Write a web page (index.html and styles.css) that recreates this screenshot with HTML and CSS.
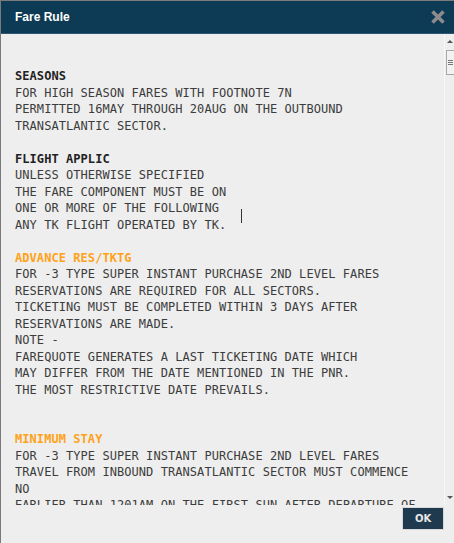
FILE: index.html
```html
<!DOCTYPE html>
<html lang="en">
<head>
    <meta charset="UTF-8">
    <title>Fare Rule</title>
    <link rel="stylesheet" href="styles.css">
</head>
<body>
    <div class="dialog">
        <div class="titlebar">
            <span class="title">Fare Rule</span>
            <span class="close">
                <svg width="16" height="16" viewBox="0 0 16 16">
                    <path d="M2.5 2.5 L13.5 13.5 M13.5 2.5 L2.5 13.5" stroke="#8c8c8c" stroke-width="3.6" stroke-linecap="butt"/>
                </svg>
            </span>
        </div>

        <div class="content">
<pre class="rules"><b class="head">SEASONS</b>
FOR HIGH SEASON FARES WITH FOOTNOTE 7N
PERMITTED 16MAY THROUGH 20AUG ON THE OUTBOUND
TRANSATLANTIC SECTOR.

<b class="head">FLIGHT APPLIC</b>
UNLESS OTHERWISE SPECIFIED
THE FARE COMPONENT MUST BE ON
ONE OR MORE OF THE FOLLOWING
ANY TK FLIGHT OPERATED BY TK.

<b class="head orange">ADVANCE RES/TKTG</b>
FOR -3 TYPE SUPER INSTANT PURCHASE 2ND LEVEL FARES
RESERVATIONS ARE REQUIRED FOR ALL SECTORS.
TICKETING MUST BE COMPLETED WITHIN 3 DAYS AFTER
RESERVATIONS ARE MADE.
NOTE -
FAREQUOTE GENERATES A LAST TICKETING DATE WHICH
MAY DIFFER FROM THE DATE MENTIONED IN THE PNR.
THE MOST RESTRICTIVE DATE PREVAILS.


<b class="head orange">MINIMUM STAY</b>
FOR -3 TYPE SUPER INSTANT PURCHASE 2ND LEVEL FARES
TRAVEL FROM INBOUND TRANSATLANTIC SECTOR MUST COMMENCE
NO
EARLIER THAN 1201AM ON THE FIRST SUN AFTER DEPARTURE OF
THE OUTBOUND TRANSATLANTIC SECTOR.</pre>
            <div class="scrollbar">
                <span class="arrow up"></span>
                <span class="thumb"><i></i><i></i><i></i></span>
                <span class="track"></span>
                <span class="arrow down"></span>
            </div>
            <span class="cursor"></span>
        </div>

        <div class="footer">
            <button class="ok">OK</button>
        </div>
    </div>
</body>
</html>
```

FILE: styles.css
```css
body {
    margin: 0;
    background-color: #eeeeee;
    font-family: "Liberation Sans", Arial, sans-serif;
}
.dialog {
    height: 543px;
    box-sizing: border-box;
    border-top: 1px solid #7a7a7a;
    border-left: 1px solid #7a7a7a;
    display: flex;
    flex-direction: column;
    background-color: #eeeeee;
}
.titlebar {
    height: 33px;
    flex: none;
    background-color: #0d3a54;
    border-bottom: 1px solid #2d5670;
    box-sizing: border-box;
    display: flex;
    align-items: center;
    justify-content: space-between;
    padding: 0 8px 0 14px;
}
.title {
    color: #fff;
    font-weight: bold;
    font-size: 12px;
}
.close {
    display: flex;
    width: 16px;
    height: 16px;
    margin-top: -1px;
}
.content {
    position: relative;
    height: 471px;
    flex: none;
    display: flex;
    overflow: hidden;
}
.rules {
    flex: 1;
    margin: 0;
    padding: 34px 0 0 14px;
    font-family: "DejaVu Sans Mono", monospace;
    font-size: 12px;
    letter-spacing: 0.06px;
    line-height: 16.5px;
    color: #3c3c3c;
    overflow: hidden;
}
.head {
    color: #222;
}
.orange {
    color: #ffa217;
}
.scrollbar {
    width: 9px;
    flex: none;
    border-left: 1px solid #f8f8f8;
    display: flex;
    flex-direction: column;
    align-items: center;
    padding-top: 6px;
    padding-bottom: 6px;
}
.arrow {
    width: 0;
    height: 0;
    border-left: 3px solid transparent;
    border-right: 3px solid transparent;
}
.arrow.up {
    border-bottom: 3px solid #555;
}
.arrow.down {
    border-top: 3px solid #555;
}
.thumb {
    width: 8px;
    height: 25px;
    margin-top: 7px;
    box-sizing: border-box;
    border: 1px solid #a8a8a8;
    border-right: none;
    background-color: #f2f2f2;
    display: flex;
    flex-direction: column;
    justify-content: center;
    gap: 1px;
    padding-left: 1px;
}
.thumb i {
    display: block;
    width: 5px;
    height: 1px;
    background-color: #777;
}
.track {
    flex: 1;
}
.cursor {
    position: absolute;
    left: 240px;
    top: 175px;
    width: 1px;
    height: 14px;
    background-color: #333;
}
.footer {
    flex: 1;
    display: flex;
    justify-content: flex-end;
    align-items: flex-start;
    padding: 2px 10px 0 0;
}
.ok {
    width: 42px;
    height: 23px;
    background-color: #1f3a4e;
    border: 1px solid #d8d8d8;
    color: #e8e8e8;
    font-family: "DejaVu Sans", sans-serif;
    font-weight: bold;
    font-size: 10px;
    padding: 0;
}
```
